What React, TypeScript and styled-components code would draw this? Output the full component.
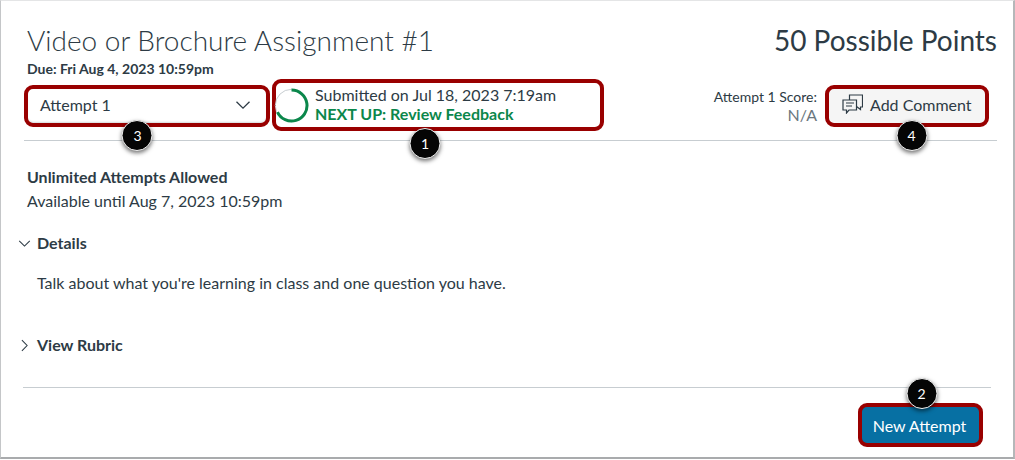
import React from "react";
import styled, { createGlobalStyle } from "styled-components";

const GlobalStyle = createGlobalStyle`
  html, body {
    margin: 0;
    padding: 0;
    background: #ffffff;
  }
  body {
    font-family: Lato, "Open Sans", sans-serif;
    color: #2d3b45;
  }
`;

const Frame = styled.div`
  box-sizing: border-box;
  width: 1015px;
  height: 459px;
  background: #fff;
  border: 1px solid #c4c6c8;
  border-top-color: #e4e5e6;
  border-bottom: 2px solid #a9abad;
  border-right: 2px solid #b5b7b9;
  padding: 0 16px 0 0;
`;

const TitleRow = styled.div`
  display: flex;
  justify-content: space-between;
  align-items: baseline;
  padding: 22px 0 0 26px;
  height: 34px;
`;

const Title = styled.div`
  font-size: 28px;
  font-weight: 300;
  line-height: 34px;
  color: #2d3b45;
`;

const Points = styled.div`
  font-size: 28px;
  font-weight: 400;
  line-height: 34px;
  color: #2d3b45;
`;

const Due = styled.div`
  font-size: 14px;
  font-weight: 700;
  line-height: 16px;
  margin: 4px 0 0 26px;
`;

const AttemptRow = styled.div`
  display: flex;
  align-items: flex-start;
  height: 64px;
  margin-left: 23px;
  border-bottom: 1px solid #c7cdd1;
  box-sizing: border-box;
`;

const Callout = styled.div<{ $top: number; $height: number }>`
  position: relative;
  box-sizing: border-box;
  margin-top: ${(p) => p.$top}px;
  height: ${(p) => p.$height}px;
  border: 4px solid #990000;
  border-radius: 9px;
  display: flex;
  align-items: center;
`;

const AttemptSelect = styled(Callout)`
  width: 246px;
  padding: 0 15px 3px 12px;
  justify-content: space-between;
  font-size: 16px;
  color: #2d3b45;
  box-shadow: inset 0 -2px 2px -1px #d5d8da;
`;

const StatusBox = styled(Callout)`
  width: 332px;
  margin-left: 2px;
  gap: 6px;
`;

const RingSlot = styled.div`
  display: flex;
  margin-left: -2px;
`;

const StatusText = styled.div`
  display: flex;
  flex-direction: column;
  font-size: 16px;
  line-height: 19px;
  color: #2d3b45;
  margin-top: -2px;
`;

const NextUp = styled.span`
  font-weight: 700;
  color: #0b874b;
`;

const ScoreBlock = styled.div`
  margin-left: auto;
  margin-right: 8px;
  text-align: right;
  padding-top: 11px;
`;

const ScoreLabel = styled.div`
  font-size: 14px;
  line-height: 17px;
  color: #2d3b45;
`;

const ScoreValue = styled.div`
  font-size: 16px;
  line-height: 20px;
  color: #6b7780;
`;

const CommentButton = styled(Callout)`
  width: 164px;
  margin-right: 8px;
  padding: 0 0 3px 13px;
  gap: 7px;
  background: #f5f5f5;
  font-size: 16px;
  color: #2d3b45;
`;

const IconSlot = styled.div`
  display: flex;
  margin-top: -2px;
`;

const Body = styled.div`
  padding: 24px 0 0 26px;
`;

const Allowed = styled.div`
  font-size: 16px;
  font-weight: 700;
  line-height: 24px;
`;

const Available = styled.div`
  font-size: 16px;
  line-height: 24px;
`;

const Toggle = styled.div<{ $top: number }>`
  display: flex;
  align-items: center;
  gap: 6px;
  margin: ${(p) => p.$top}px 0 0 -9px;
  font-size: 16px;
  font-weight: 700;
  line-height: 24px;
`;

const Paragraph = styled.p`
  margin: 16px 0 0 10px;
  font-size: 16px;
  line-height: 24px;
`;

const Footer = styled.div`
  margin: 30px 6px 0 22px;
  border-top: 1px solid #c7cdd1;
  display: flex;
  justify-content: flex-end;
  padding: 15px 8px 0 0;
`;

const NewAttempt = styled.div`
  position: relative;
  box-sizing: border-box;
  width: 125px;
  height: 44px;
  border: 4px solid #990000;
  border-radius: 9px;
  background: #0770a3;
  color: #fff;
  font-size: 16px;
  padding-right: 2px;
  display: flex;
  align-items: center;
  justify-content: center;
`;

const Badge = styled.div<{ $left: string; $top: number }>`
  position: absolute;
  left: ${(p) => p.$left};
  top: ${(p) => p.$top}px;
  transform: translateX(-50%);
  box-sizing: border-box;
  width: 31px;
  height: 31px;
  border-radius: 50%;
  background: #050505;
  border: 1px solid #f2f2f2;
  box-shadow: 0 2px 4px rgba(0, 0, 0, 0.55);
  color: #fff;
  font-size: 14px;
  display: flex;
  align-items: center;
  justify-content: center;
  z-index: 2;
`;

const Chevron = ({ dir, size }: { dir: "down" | "right"; size: number }) => (
  <svg width={size} height={size} viewBox="0 0 16 16" fill="none" stroke="#2d3b45" strokeWidth="1.3">
    {dir === "down" ? <path d="M1.5 4.8 8 11.2l6.5-6.4" /> : <path d="M4.8 1.5 11.2 8l-6.4 6.5" />}
  </svg>
);

const ProgressRing = () => (
  <svg width="35" height="35" viewBox="0 0 35 35" fill="none">
    <circle cx="17.5" cy="17.5" r="16.2" stroke="#c7cdd1" strokeWidth="1" />
    <path d="M17.5 2A15.5 15.5 0 1 1 3.45 24.05" stroke="#0b874b" strokeWidth="3" />
  </svg>
);

const CommentIcon = () => (
  <svg width="21" height="20" viewBox="0 0 21 20" fill="none" stroke="#2d3b45" strokeWidth="1.2">
    <path d="M1 6h13.5v10H7L4.500 19v-3H1z" />
    <path d="M7.500 6V1h13v12h-2v2.500l-4-3" />
    <path d="M4 9h8M4 12h6" />
  </svg>
);

export default function App() {
  return (
    <>
      <GlobalStyle />
      <Frame>
        <TitleRow>
          <Title>Video or Brochure Assignment #1</Title>
          <Points>50 Possible Points</Points>
        </TitleRow>
        <Due>Due: Fri Aug 4, 2023 10:59pm</Due>
        <AttemptRow>
          <AttemptSelect $top={8} $height={42}>
            Attempt 1
            <Chevron dir="down" size={16} />
            <Badge $left="46%" $top={31}>3</Badge>
          </AttemptSelect>
          <StatusBox $top={2} $height={52}>
            <RingSlot>
              <ProgressRing />
            </RingSlot>
            <StatusText>
              <span>Submitted on Jul 18, 2023 7:19am</span>
              <NextUp>NEXT UP: Review Feedback</NextUp>
            </StatusText>
            <Badge $left="46%" $top={45}>1</Badge>
          </StatusBox>
          <ScoreBlock>
            <ScoreLabel>Attempt 1 Score:</ScoreLabel>
            <ScoreValue>N/A</ScoreValue>
          </ScoreBlock>
          <CommentButton $top={8} $height={42}>
            <IconSlot>
              <CommentIcon />
            </IconSlot>
            Add Comment
            <Badge $left="53%" $top={31}>4</Badge>
          </CommentButton>
        </AttemptRow>
        <Body>
          <Allowed>Unlimited Attempts Allowed</Allowed>
          <Available>Available until Aug 7, 2023 10:59pm</Available>
          <Toggle $top={18}>
            <Chevron dir="down" size={13} />
            Details
          </Toggle>
          <Paragraph>Talk about what you're learning in class and one question you have.</Paragraph>
          <Toggle $top={38}>
            <Chevron dir="right" size={13} />
            View Rubric
          </Toggle>
        </Body>
        <Footer>
          <NewAttempt>
            New Attempt
            <Badge $left="51%" $top={-29}>2</Badge>
          </NewAttempt>
        </Footer>
      </Frame>
    </>
  );
}
